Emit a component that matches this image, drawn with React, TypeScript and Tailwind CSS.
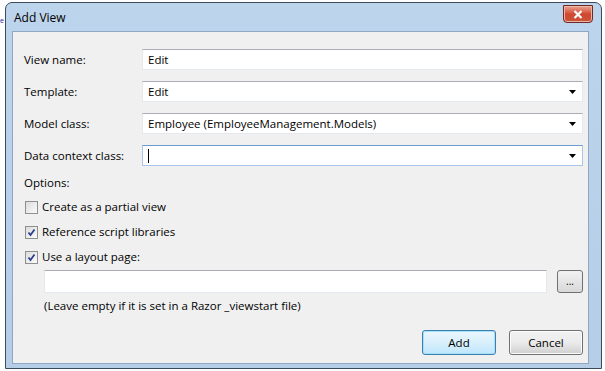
import React from 'react';

const font = { fontFamily: '"Open Sans", "Noto Sans", sans-serif' };

function Arrow() {
	return (
		<svg width="7" height="4" viewBox="0 0 7 4" className="shrink-0">
			<path d="M0 0h7L3.5 4z" fill="#000" />
		</svg>
	);
}

function Field({ label, value, combo, focused }: { label: string; value?: string; combo?: boolean; focused?: boolean }) {
	return (
		<div className="flex items-center h-[21px]">
			<div className="w-[118px] text-[11.5px] text-black">{label}</div>
			<div
				className={
					'flex-1 h-[21px] flex items-center pl-[5px] pr-[6px] bg-white border ' +
					(focused
						? 'border-[#a9c6e8] border-t-[#6d9ad0]'
						: 'border-[#e3e9ef] border-t-[#abadb3]')
				}
			>
				<div className="flex-1 text-[11.5px] text-black leading-none">
					{focused ? <span className="inline-block w-px h-[14px] bg-black align-middle" /> : value}
				</div>
				{combo && <Arrow />}
			</div>
		</div>
	);
}

function Check({ label, checked }: { label: string; checked?: boolean }) {
	return (
		<div className="flex items-center h-[16px] gap-[4px]">
			<div className="w-[13px] h-[13px] border border-[#8e8f8f] bg-gradient-to-br from-[#dcdcdc] to-[#fbfbfb] flex items-center justify-center">
				{checked && (
					<svg width="9" height="9" viewBox="0 0 9 9">
						<path d="M1.5 4.5l2 2.5L7.5 1.5" stroke="#2c3e8c" strokeWidth="1.8" fill="none" />
					</svg>
				)}
			</div>
			<span className="text-[11.5px] text-black">{label}</span>
		</div>
	);
}

function Button({ children, def }: { children: React.ReactNode; def?: boolean }) {
	return (
		<div
			className={
				'w-[74px] h-[25px] rounded-[3px] border flex items-center justify-center text-[11.5px] text-black ' +
				(def
					? 'border-[#3c7fb1] shadow-[inset_0_0_0_1px_#a6e0f6] bg-gradient-to-b from-[#eaf6fd] via-[#d9f0fc] to-[#bee6fd]'
					: 'border-[#707070] shadow-[inset_0_0_0_1px_#fcfcfc] bg-gradient-to-b from-[#f2f2f2] via-[#ebebeb] to-[#cfcfcf]')
			}
		>
			{children}
		</div>
	);
}

export default function App() {
	return (
		<div className="w-[605px] h-[371px] bg-white flex overflow-hidden" style={font}>
			<div className="w-[5px] flex flex-col text-[7px] leading-none text-[#2020a0] overflow-hidden pt-[17px]">
				<span>e</span>
			</div>
			<div className="mt-[2px] w-[597px] h-[367px] rounded-t-[7px] border border-[#3c4b5c] bg-gradient-to-b from-[#bcd4ec] to-[#b5cde6] flex flex-col">
				<div className="h-[28px] flex items-center justify-between pl-[8px] pr-[8px]">
					<span className="text-[12px] text-black mt-[2px]">Add View</span>
					<div className="w-[30px] h-[18px] mt-[-6px] rounded-b-[4px] border border-[#6b2a22] bg-gradient-to-b from-[#e8a493] via-[#d1472f] to-[#c8543a] flex items-center justify-center shadow-[inset_0_0_0_1px_#f0b4a6]">
						<svg width="10" height="9" viewBox="0 0 10 9">
							<path d="M1.5 1l7 7M8.5 1l-7 7" stroke="#fff" strokeWidth="2.2" />
						</svg>
					</div>
				</div>
				<div className="ml-[6px] mr-[12px] mb-[4px] flex-1 bg-[#f0f0f0] border border-[#8fa7c3] flex flex-col pl-[11px] pr-[5px] pt-[17px]">
					<div className="flex flex-col gap-[11px]">
						<Field label="View name:" value="Edit" />
						<Field label="Template:" value="Edit" combo />
						<Field label="Model class:" value="Employee (EmployeeManagement.Models)" combo />
						<Field label="Data context class:" combo focused />
					</div>
					<div className="text-[11.5px] text-black mt-[9px] h-[16px] leading-[16px]">Options:</div>
					<div className="flex flex-col gap-[9px] mt-[8px] pl-[1px]">
						<Check label="Create as a partial view" />
						<Check label="Reference script libraries" checked />
						<Check label="Use a layout page:" checked />
					</div>
					<div className="flex items-center mt-[5px] pl-[20px]">
						<div className="flex-1 h-[23px] bg-white border border-[#e3e9ef] border-t-[#abadb3]" />
						<div className="ml-[10px] w-[26px] h-[23px] rounded-[3px] border border-[#707070] bg-gradient-to-b from-[#f2f2f2] to-[#d8d8d8] flex items-center justify-center text-[10px] leading-none text-black pb-[2px]">
							...
						</div>
					</div>
					<div className="pl-[20px] mt-[4px] text-[11.5px] text-black">(Leave empty if it is set in a Razor _viewstart file)</div>
					<div className="flex justify-end gap-[13px] mt-[16px]">
						<Button def>Add</Button>
						<Button>Cancel</Button>
					</div>
				</div>
			</div>
		</div>
	);
}
